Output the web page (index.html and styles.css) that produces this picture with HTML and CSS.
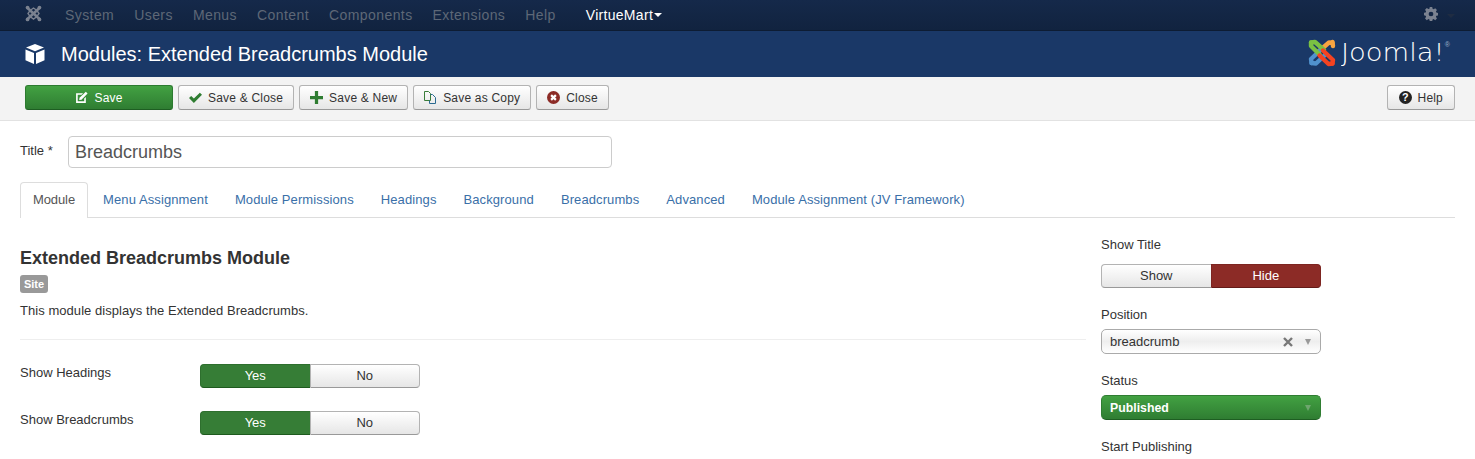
FILE: index.html
```html
<!DOCTYPE html>
<html lang="en">
<head>
<meta charset="utf-8">
<title>Modules: Extended Breadcrumbs Module</title>
<link rel="stylesheet" href="styles.css">
</head>
<body>
<nav class="navbar">
  <svg class="nav-logo" viewBox="0 0 20 20"><g fill="none" stroke="#7b8290" stroke-width="3"><path d="M3 3.5 L17 16.5"/><path d="M17 3.5 L3 16.5"/><path d="M6 6.5 L10 3.5 L14 6.5 L16.5 10 L14 13.5 L10 16.5 L6 13.5 L3.5 10 Z" stroke-width="1.6"/></g><circle cx="3" cy="3" r="2.2" fill="#7b8290"/><circle cx="17" cy="3" r="2.2" fill="#7b8290"/><circle cx="3" cy="17" r="2.2" fill="#7b8290"/><circle cx="17" cy="17" r="2.2" fill="#7b8290"/></svg>
  <ul class="menu">
    <li>System</li><li>Users</li><li>Menus</li><li>Content</li><li>Components</li><li>Extensions</li><li>Help</li>
    <li class="menu-active">VirtueMart<span class="caret caret-white"></span></li>
  </ul>
  <div class="nav-right">
    <svg class="cog" viewBox="0 0 16 16"><path fill="#7b8290" fill-rule="evenodd" d="M6.6 0h2.8l.4 2.1 1.2.5 1.8-1.2 2 2-1.2 1.8.5 1.2 2.1.4v2.8l-2.1.4-.5 1.2 1.2 1.8-2 2-1.8-1.2-1.2.5-.4 2.1H6.6l-.4-2.1-1.2-.5-1.8 1.2-2-2 1.2-1.8-.5-1.2L-.2 9.4V6.6l2.1-.4.5-1.2-1.2-1.8 2-2L5 2.4l1.2-.5zM8 5.3a2.7 2.7 0 1 0 0 5.4 2.7 2.7 0 0 0 0-5.4z"/></svg>
    <span class="caret caret-dark"></span>
  </div>
</nav>
<header class="header">
  <svg class="cube" viewBox="0 0 20 20"><path fill="#fff" d="M10 0 L19 3.5 L10 7.2 L1 3.5 Z"/><path fill="#fff" d="M.5 5.5 L9 9 V20 L.5 16.2 Z"/><path fill="#fff" d="M19.5 5.5 L11 9 V20 L19.5 16.2 Z"/></svg>
  <h1 class="page-title">Modules: Extended Breadcrumbs Module</h1>
  <div class="brand">
    <svg class="brand-mark" viewBox="0 0 30 30"><g fill="none" stroke-width="4.4" stroke-linecap="round" stroke-linejoin="round"><path stroke="#f9a541" d="M25.5 5 L22 4.5 L11 14"/><path stroke="#f9a541" d="M25.5 4 L26 8"/><path stroke="#5091cd" d="M4.5 25 L4 21 L14 11.5"/><path stroke="#5091cd" d="M4.5 25 L9 25.5 L18 17"/><path stroke="#7ac143" d="M4 4.5 L4 8 L13 17"/><path stroke="#7ac143" d="M4 4.5 L8 4 L17 12"/><path stroke="#f44321" d="M25.5 25.5 L26 22 L16 12.5"/><path stroke="#f44321" d="M25.5 25.5 L21.5 26 L12.5 17.5"/></g></svg>
    <span class="brand-word">Joomla!</span><sup class="brand-reg">®</sup>
  </div>
</header>
<div class="toolbar">
  <button class="btn btn-save"><svg class="ico" viewBox="0 0 12 12"><path fill="#fff" d="M1 2h6.5L6 3.5H2.5v6h6V7L10 5.5V11H1z"/><path fill="#fff" d="M10 .8 11.6 2.4 6 8 3.8 8.4 4.2 6.2z"/></svg>Save</button>
  <button class="btn"><svg class="ico" viewBox="0 0 12 12"><path fill="#2f7d32" d="M0 6.5 2 4.5 4.5 7 10 1.5 12 3.5 4.5 11z"/></svg>Save &amp; Close</button>
  <button class="btn"><svg class="ico" viewBox="0 0 12 12"><path fill="#2f7d32" d="M4.5 0h3v4.5H12v3H7.5V12h-3V7.5H0v-3h4.5z"/></svg>Save &amp; New</button>
  <button class="btn"><svg class="ico" viewBox="0 0 13 13"><g fill="none" stroke-width="1"><path stroke="#3a7d3a" d="M.5.5h4l2 2v7h-6z"/><path stroke="#2a6a90" d="M6.5 3.5h2l3 3v6h-6v-3"/></g></svg>Save as Copy</button>
  <button class="btn"><svg class="ico" viewBox="0 0 12 12"><circle cx="6" cy="6" r="6" fill="#8c2b26"/><path stroke="#fff" stroke-width="2" d="M3.8 3.8l4.4 4.4M8.2 3.8l-4.4 4.4"/></svg>Close</button>
  <button class="btn btn-help"><svg class="ico" viewBox="0 0 12 12"><circle cx="6" cy="6" r="6" fill="#222"/><text x="6" y="9.4" class="q">?</text></svg>Help</button>
</div>
<main class="content">
  <div class="title-row">
    <label class="title-label">Title *</label>
    <input class="title-input" type="text" value="Breadcrumbs">
  </div>
  <ul class="tabs">
    <li class="tab tab-active">Module</li><li class="tab">Menu Assignment</li><li class="tab">Module Permissions</li><li class="tab">Headings</li><li class="tab">Background</li><li class="tab">Breadcrumbs</li><li class="tab">Advanced</li><li class="tab">Module Assignment (JV Framework)</li>
  </ul>
  <div class="columns">
    <section class="main-col">
      <h2 class="module-name">Extended Breadcrumbs Module</h2>
      <span class="badge">Site</span>
      <p class="desc">This module displays the Extended Breadcrumbs.</p>
      <hr class="rule">
      <div class="field">
        <span class="field-label">Show Headings</span>
        <div class="toggle"><span class="seg seg-yes">Yes</span><span class="seg">No</span></div>
      </div>
      <div class="field">
        <span class="field-label">Show Breadcrumbs</span>
        <div class="toggle"><span class="seg seg-yes">Yes</span><span class="seg">No</span></div>
      </div>
    </section>
    <aside class="side-col">
      <div class="side-label">Show Title</div>
      <div class="toggle side-control"><span class="seg">Show</span><span class="seg seg-hide">Hide</span></div>
      <div class="side-label">Position</div>
      <div class="select side-control"><span class="select-text">breadcrumb</span><svg class="select-x" viewBox="0 0 10 10"><path stroke="#777" stroke-width="2.4" d="M1 1l8 8M9 1l-8 8"/></svg><span class="arrow"></span></div>
      <div class="side-label">Status</div>
      <div class="select select-green side-control"><span class="select-text">Published</span><span class="arrow"></span></div>
      <div class="side-label">Start Publishing</div>
    </aside>
  </div>
</main>
</body>
</html>
```
FILE: styles.css
```css
* { box-sizing: border-box; }
html, body { margin: 0; padding: 0; }
body { width: 1475px; height: 459px; overflow: hidden; background: #fff; color: #333; font-family: "Liberation Sans", Arial, sans-serif; font-size: 13px; }

.navbar { height: 31px; display: flex; align-items: center; padding: 0 20px 1px 25px; background: linear-gradient(#15294a, #11233f); border-bottom: 1px solid #0d1c33; }
.nav-logo { width: 17px; height: 17px; margin-top: -3px; }
.menu { display: flex; list-style: none; margin: 0 0 0 13px; padding: 0; font-size: 14px; letter-spacing: .42px; color: #5e6877; }
.menu li { padding: 0 10px; }
.menu .menu-active { color: #fff; margin-left: 10px; display: flex; align-items: center; letter-spacing: .3px; }
.caret { display: inline-block; width: 0; height: 0; border-left: 4px solid transparent; border-right: 4px solid transparent; border-top: 4px solid #fff; }
.caret-white { margin-left: 1px; }
.caret-dark { border-top-color: #1f2c42; margin-left: 9px; margin-top: 3px; }
.nav-right { margin-left: auto; display: flex; align-items: center; }
.cog { width: 14px; height: 14px; margin-top: -2px; }

.header { height: 46px; display: flex; align-items: center; padding: 0 25px; background: #1a3867; color: #fff; }
.cube { width: 20px; height: 20px; }
.page-title { margin: 0 0 0 16px; font-size: 20px; font-weight: 400; }
.brand { margin-left: auto; display: flex; align-items: center; position: relative; padding-right: 5px; }
.brand-mark { width: 30px; height: 30px; margin-top: -3px; }
.brand-word { font-family: "DejaVu Sans", sans-serif; font-weight: 200; font-size: 24px; margin-left: 4px; margin-right: 13px; margin-top: -3px; color: #fff; line-height: 30px; transform: scaleX(1.14); transform-origin: left center; }
.brand-reg { position: absolute; right: 0; top: 0; font-size: 7px; color: #9fb0c8; line-height: 1; }

.toolbar { height: 44px; display: flex; align-items: center; gap: 5px; padding: 0 20px 2px 25px; background: #f3f3f3; border-bottom: 1px solid #e2e2e2; }
.btn { height: 25px; padding: 0 10px; display: inline-flex; align-items: center; justify-content: center; font-family: inherit; font-size: 12px; letter-spacing: .2px; color: #333; border: 1px solid #b3b3b3; border-bottom-color: #999; border-radius: 3px; background: linear-gradient(#fff, #e6e6e6); }
.btn .ico { width: 13px; height: 13px; margin-right: 6px; }
.btn-save { width: 148px; color: #fff; background: linear-gradient(#42a142, #2f7d32); border-color: #2c7a30; border-bottom-color: #1e5e22; }
.btn-help { margin-left: auto; padding: 0 11px; }
.q { font-family: "Liberation Sans", sans-serif; font-size: 10px; font-weight: 700; fill: #fff; text-anchor: middle; }

.content { padding: 15px 20px 0; }
.title-row { display: flex; align-items: flex-start; }
.title-label { width: 48px; padding-top: 8px; font-size: 13px; line-height: 14px; }
.title-input { width: 544px; height: 32px; padding: 0 6px; font-family: inherit; font-size: 18px; color: #555; border: 1px solid #ccc; border-radius: 4px; background: #fff; outline: none; }

.tabs { display: flex; list-style: none; margin: 14px 0 0; padding: 0; height: 36px; border-bottom: 1px solid #ddd; font-size: 13px; color: #3a6fa8; }
.tab { height: 36px; padding: 0 12.5px; line-height: 34px; letter-spacing: .1px; border: 1px solid transparent; border-bottom: 0; }
.tab-active { color: #555; background: #fff; border-color: #ddd; border-radius: 4px 4px 0 0; margin-right: 1.5px; padding: 0 12px; letter-spacing: -.1px; }

.columns { display: flex; gap: 15px; }
.main-col { width: 1066px; padding-top: 30px; }
.module-name { margin: 0; font-size: 18px; line-height: 20px; font-weight: 700; }
.badge { display: block; width: 28px; height: 18px; margin-top: 7px; background: #999; color: #fff; font-size: 11px; font-weight: 700; line-height: 18px; text-align: center; border-radius: 3px; }
.desc { margin: 10px 0 0; font-size: 13px; line-height: 16px; letter-spacing: .05px; }
.rule { height: 1px; margin: 20px 0 24px; border: 0; background: #eee; }
.field { display: flex; align-items: flex-start; margin-bottom: 23px; }
.field-label { width: 180px; padding-top: 1px; font-size: 13px; line-height: 16px; }
.toggle { display: flex; width: 220px; height: 24px; font-size: 13px; }
.seg { flex: 1; display: flex; align-items: center; justify-content: center; padding-bottom: 1px; border: 1px solid #b3b3b3; border-bottom-color: #999; background: linear-gradient(#fff, #e6e6e6); color: #333; }
.seg:first-child { border-radius: 4px 0 0 4px; border-right: 0; }
.seg:last-child { border-radius: 0 4px 4px 0; }
.seg-yes { background: #367d36; border-color: #2e6f2e; border-bottom-color: #1e5a1e; color: #fff; }
.seg-hide { background: #8c2b26; border-color: #7d2521; border-bottom-color: #641b18; color: #fff; }

.side-col { width: 220px; padding-top: 19px; }
.side-label { font-size: 13px; line-height: 16px; }
.side-control { margin: 11px 0 19px; }
.select { height: 25px; display: flex; align-items: center; padding: 0 9px 0 8px; font-size: 13px; border: 1px solid #aaa; border-radius: 5px; background: linear-gradient(#fff 0%, #eee 50%, #fff 100%); }
.side-control.select { margin: 6px 0 19px; }
.select-text { flex: 1; }
.select-x { width: 10px; height: 10px; margin-right: 12px; }
.arrow { width: 0; height: 0; border-left: 3.5px solid transparent; border-right: 3.5px solid transparent; border-top: 6px solid #999; }
.select-green { color: #fff; font-weight: 700; font-size: 12.3px; background: linear-gradient(#42a142, #2f7d32); border-color: #2f7d32; border-bottom-color: #1e5e22; }
.select-green .arrow { border-top-color: #6ea66e; }
```
